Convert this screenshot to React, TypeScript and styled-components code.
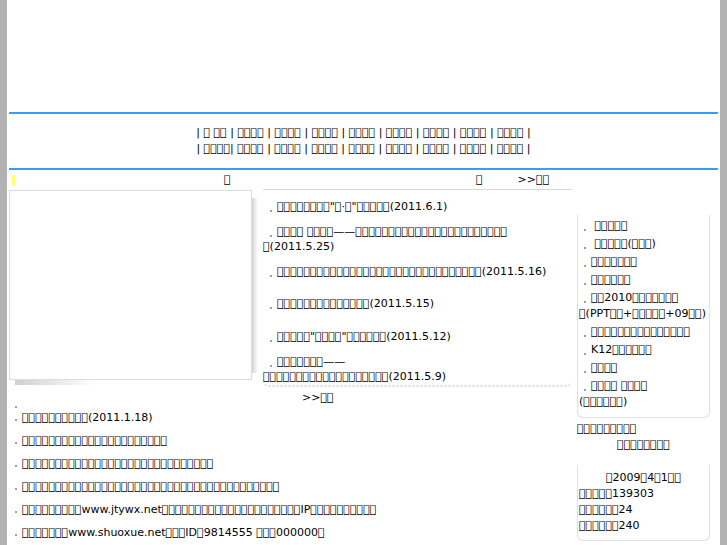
import React from "react";
import styled, { createGlobalStyle } from "styled-components";

const TOFU = "\uE000";
// '#' marks a glyph that the reference shows as an empty box
const tf = (s: string) =>
  s
    .split("")
    .map((c, i) => (c === "#" ? TOFU + (s[i + 1] === "#" ? "\u200B" : "") : c))
    .join("");

const GlobalStyle = createGlobalStyle`
  html, body { margin: 0; padding: 0; }
  body {
    background: #b2b2b2;
    font-family: "DejaVu Sans", sans-serif;
    font-size: 11px;
    color: #000;
  }
`;

const Page = styled.div`
  width: 713px;
  min-height: 545px;
  margin: 0 auto;
  padding: 0 2px;
  box-sizing: border-box;
  background: #fff;
`;

const Header = styled.div`
  height: 112px;
`;

const Rule = styled.div`
  height: 2px;
  background: #3a9bff;
`;

const Nav = styled.div`
  padding: 11px 0;
  line-height: 16px;
  text-align: center;
`;

const Main = styled.div`
  display: flex;
  align-items: flex-start;
`;

const LeftMid = styled.div`
  width: 563px;
`;

const TopRow = styled.div`
  display: flex;
  gap: 11px;
  align-items: flex-start;
`;

const LeftCol = styled.div`
  width: 243px;
`;

const TitleBar = styled.div<{ $line?: boolean }>`
  height: 20px;
  box-sizing: border-box;
  display: flex;
  align-items: center;
  line-height: 16px;
  border-bottom: ${(p) => (p.$line ? "1px solid #d8d8d8" : "none")};
`;

const Marker = styled.span`
  width: 1px;
  height: 10px;
  border-left: 1px solid #ffff66;
  border-right: 1px solid #ffff66;
  margin-left: 3px;
`;

const TitleText = styled.span<{ $at: number }>`
  margin-left: ${(p) => p.$at}px;
`;

const PhotoBox = styled.div`
  position: relative;
  height: 190px;
  box-sizing: border-box;
  border: 1px solid #dcdcdc;
  background: #fff;
  &::after {
    content: "";
    position: absolute;
    right: -7px;
    top: 7px;
    width: 6px;
    height: 175px;
    background: linear-gradient(to right, #d4d4d4, rgba(230, 230, 230, 0));
  }
  &::before {
    content: "";
    position: absolute;
    left: 5px;
    bottom: -6px;
    width: 80px;
    height: 5px;
    background: linear-gradient(to right, #d0d0d0, rgba(230, 230, 230, 0));
  }
`;

const MidCol = styled.div`
  width: 309px;
`;

const NewsBox = styled.div`
  display: grid;
  grid-auto-rows: 32.5px;
  border-bottom: 2px dotted #dcdcdc;
  border-radius: 0 0 6px 6px;
`;

const NewsRow = styled.div`
  display: flex;
  align-items: center;
  line-height: 15px;
`;

const NewsText = styled.div`
  &::before {
    content: "";
    display: inline-block;
    width: 2px;
    height: 2px;
    background: #a0a0a0;
    margin: 0 5px 0 7px;
    vertical-align: -2px;
  }
`;

const More = styled.div<{ $pad: number }>`
  padding: 4px 0 0 ${(p) => p.$pad}px;
  line-height: 14px;
  height: 16px;
  box-sizing: border-box;
`;

const List = styled.div`
  padding-left: 6px;
`;

const ListItem = styled.div<{ $h: number }>`
  height: ${(p) => p.$h}px;
  display: flex;
  align-items: center;
  line-height: 15px;
  &::before {
    content: "";
    width: 2px;
    height: 2px;
    background: #a0a0a0;
    margin: 4px 5px 0 0;
    flex: none;
  }
`;

const RightCol = styled.div`
  width: 133px;
  margin-left: 5px;
  padding-top: 45px;
`;

const SideBox = styled.div<{ $pt: number; $pb: number }>`
  border: 1px solid #e0e0e0;
  border-top: none;
  border-radius: 0 0 6px 6px;
  padding: ${(p) => p.$pt}px 1px ${(p) => p.$pb}px 1px;
  line-height: 16px;
`;

const SideItem = styled.div`
  padding: 1px 0;
  &::before {
    content: "";
    display: inline-block;
    width: 2px;
    height: 2px;
    background: #a0a0a0;
    margin: 0 5px 0 5px;
    vertical-align: -2px;
  }
`;

const Notice = styled.div`
  padding: 3px 0 12px;
  line-height: 16px;
`;

const Centered = styled.div`
  text-align: center;
`;

const StatLine = styled.div<{ $center?: boolean }>`
  text-align: ${(p) => (p.$center ? "center" : "left")};
`;

const navRow1 = "| # ## | #### | #### | #### | #### | #### | #### | #### | #### |";
const navRow2 = "| ####| #### | #### | #### | #### | #### | #### | #### | #### |";

const news: React.ReactNode[] = [
  tf('########"#·#"#####(2011.6.1)'),
  tf("#### ####——########################(2011.5.25)"),
  tf("###############################(2011.5.16)"),
  tf("##############(2011.5.15)"),
  tf('#####"####"######(2011.5.12)'),
  <>
    {tf("#######——")}
    <br />
    {tf("###################(2011.5.9)")}
  </>,
];

const side: React.ReactNode[] = [
  tf("\u00a0#####"),
  tf("\u00a0#####(###)"),
  tf("#######"),
  tf("######"),
  tf("##2010########(PPT##+#####+09##)"),
  tf("###############"),
  tf("K12######"),
  tf("####"),
  <>
    {tf("#### ####")}
    <br />
    {tf("(######)")}
  </>,
];

const bottom = [
  "",
  tf("##########(2011.1.18)"),
  tf("######################"),
  tf("#############################"),
  tf("#######################################"),
  tf("#########www.jtywx.net#####################IP##########"),
  tf("#######www.shuoxue.net###ID#9814555 ###000000#"),
];

export default function App() {
  return (
    <>
      <GlobalStyle />
      <Page>
        <Header />
        <Rule />
        <Nav>
          <div>{tf(navRow1)}</div>
          <div>{tf(navRow2)}</div>
        </Nav>
        <Rule />
        <Main>
          <LeftMid>
            <TopRow>
              <LeftCol>
                <TitleBar>
                  <Marker />
                  <TitleText $at={209}>{tf("#")}</TitleText>
                </TitleBar>
                <PhotoBox />
              </LeftCol>
              <MidCol>
                <TitleBar $line>
                  <TitleText $at={213}>{tf("#")}</TitleText>
                  <TitleText $at={35}>{tf(">>##")}</TitleText>
                </TitleBar>
                <NewsBox>
                  {news.map((n, i) => (
                    <NewsRow key={i}>
                      <NewsText>{n}</NewsText>
                    </NewsRow>
                  ))}
                </NewsBox>
                <More $pad={39}>{tf(">>##")}</More>
              </MidCol>
            </TopRow>
            <List>
              {bottom.map((b, i) => (
                <ListItem key={i} $h={i === 0 ? 3 : 23}>
                  {b}
                </ListItem>
              ))}
            </List>
          </LeftMid>
          <RightCol>
            <SideBox $pt={2} $pb={6}>
              {side.map((s, i) => (
                <SideItem key={i}>{s}</SideItem>
              ))}
            </SideBox>
            <Notice>
              <div>{tf("#########")}</div>
              <Centered>{tf("########")}</Centered>
            </Notice>
            <SideBox $pt={5} $pb={6}>
              <StatLine $center>{tf("#2009#4#1##")}</StatLine>
              <StatLine>{tf("#####139303")}</StatLine>
              <StatLine>{tf("######24")}</StatLine>
              <StatLine>{tf("######240")}</StatLine>
            </SideBox>
          </RightCol>
        </Main>
      </Page>
    </>
  );
}
